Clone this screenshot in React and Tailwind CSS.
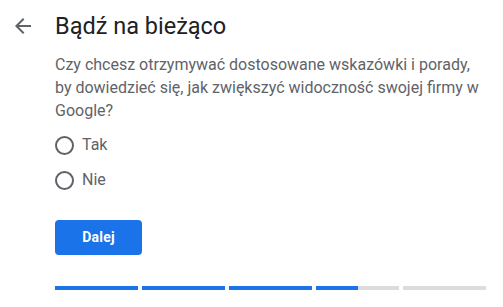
export default function App() {
  const segs = [100, 100, 100, 50, 0];
  return (
    <div className="w-[503px] h-[307px] bg-white overflow-hidden" style={{ fontFamily: 'Roboto, "Liberation Sans", sans-serif' }}>
      <div className="flex items-center pt-[12px] pl-[11px]">
        <svg width="24" height="24" viewBox="0 0 24 24" className="shrink-0">
          <path d="M20 11H7.83l5.59-5.59L12 4l-8 8 8 8 1.41-1.41L7.83 13H20v-2z" fill="#5f6368" />
        </svg>
        <h1 className="ml-[20px] text-[23.5px] leading-[28px] text-[#202124]">Bądź na bieżąco</h1>
      </div>
      <div className="pl-[55px] pr-[17px]">
        <p className="mt-[13px] text-[16px] leading-[23px] text-[#5f6368]">
          Czy chcesz otrzymywać dostosowane wskazówki i porady, by dowiedzieć się, jak zwiększyć widoczność swojej firmy w Google?
        </p>
        <div className="mt-[11px] flex flex-col gap-[11px]">
          {['Tak', 'Nie'].map((t) => (
            <label key={t} className="flex items-center h-[24px]">
              <span className="w-[19px] h-[19px] rounded-full border-2 border-[#5f6368] shrink-0" />
              <span className="ml-[8px] text-[16px] text-[#5f6368]">{t}</span>
            </label>
          ))}
        </div>
        <button className="mt-[28px] w-[87px] h-[35px] rounded-[4px] bg-[#1a73e8] text-white text-[14px] font-bold tracking-[0.2px]">
          Dalej
        </button>
        <div className="mt-[31px] flex gap-[4px]">
          {segs.map((p, i) => (
            <div key={i} className="w-[83px] h-[4px] bg-[#dadce0]">
              <div className="h-full bg-[#1a73e8]" style={{ width: `${p}%` }} />
            </div>
          ))}
        </div>
      </div>
    </div>
  );
}
